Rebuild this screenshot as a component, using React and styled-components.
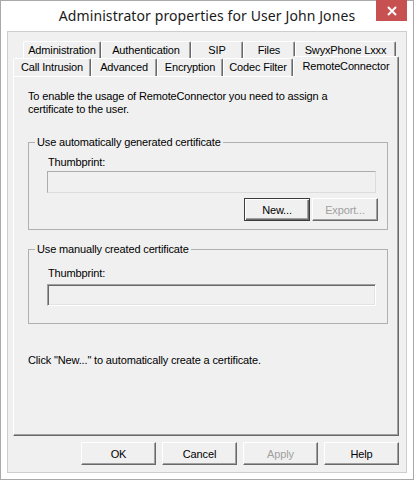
import React from 'react';
import styled, { createGlobalStyle, css } from 'styled-components';

const Global = createGlobalStyle`
  html, body { margin: 0; padding: 0; background: #fff; }
  body { font-family: "Liberation Sans", Arial, sans-serif; }
  * { box-sizing: border-box; }
`;

const Window = styled.div`
  width: 414px;
  height: 480px;
  border: 1px solid #a9a9a9;
  background: #fff;
  display: flex;
  flex-direction: column;
`;

const TitleBar = styled.div`
  position: relative;
  height: 30px;
  flex: none;
  display: flex;
  align-items: center;
  justify-content: center;
  padding-bottom: 2px;
  font-family: "Noto Sans", "Open Sans", sans-serif;
  font-size: 14px;
  letter-spacing: 0.1px;
  color: #1a1a1a;
`;

const CloseButton = styled.div`
  position: absolute;
  top: -1px;
  right: 6px;
  width: 31px;
  height: 21px;
  background: #c75050;
  display: flex;
  align-items: center;
  justify-content: center;
`;

const Client = styled.div`
  flex: 1;
  margin: 0 6px 6px;
  border: 1px solid #cdcdcd;
  background: #f0f0f0;
  padding: 9px 7px 7px 5px;
  display: flex;
  flex-direction: column;
  font-size: 11px;
  line-height: 13px;
  letter-spacing: -0.15px;
  color: #000;
`;

const TabStrip = styled.div`
  height: 35px;
  flex: none;
  display: flex;
  flex-direction: column;
`;

const TabRow = styled.div`
  display: flex;
  height: ${p => p.$h}px;
  padding-left: ${p => p.$indent}px;
`;

const Tab = styled.div`
  flex: none;
  width: ${p => p.$w}px;
  height: 100%;
  background: #f0f0f0;
  border-top: 1px solid #fff;
  border-left: 1px solid #fff;
  border-right: 1px solid #696969;
  box-shadow: inset -1px 0 #a0a0a0;
  border-radius: 2px 2px 0 0;
  display: flex;
  align-items: center;
  justify-content: center;
  white-space: nowrap;
  ${p => p.$selected && css`
    position: relative;
    z-index: 2;
    height: calc(100% + 3px);
    margin-top: -2px;
    align-items: flex-start;
    padding-top: 3px;
  `}
`;

const Panel = styled.div`
  height: 360px;
  flex: none;
  border-top: 1px solid #fff;
  border-left: 1px solid #fff;
  border-right: 1px solid #696969;
  border-bottom: 1px solid #696969;
  box-shadow: inset -1px -1px #a0a0a0;
  padding: 13px 10px 0 14px;
  display: flex;
  flex-direction: column;
`;

const Paragraph = styled.div`
  margin-top: ${p => p.$mt || 0}px;
`;

const Group = styled.fieldset`
  margin: ${p => p.$mt}px 0 0 0;
  padding: 0 11px ${p => p.$pb}px 18px;
  border: 1px solid #b0b0b0;
  min-width: 0;
  display: flex;
  flex-direction: column;
`;

const Legend = styled.legend`
  margin-left: -12px;
  padding: 0 2px;
  line-height: 13px;
`;

const Label = styled.div`
  margin-top: ${p => p.$mt}px;
  padding-left: 1px;
`;

const Field = styled.div`
  margin-top: ${p => p.$mt}px;
  height: 22px;
  background: #f0f0f0;
  border: 1px solid;
  ${p => p.$sunken
    ? css`
      border-color: #a0a0a0 #fff #fff #a0a0a0;
      box-shadow: inset 1px 1px #696969, inset -1px -1px #e3e3e3;
    `
    : css`
      border-color: #acacac #dcdcdc #dcdcdc #acacac;
    `}
`;

const ButtonRow = styled.div`
  display: flex;
  justify-content: flex-end;
  gap: ${p => p.$gap}px;
  margin-top: ${p => p.$mt}px;
  margin-right: ${p => p.$mr || 0}px;
`;

const Button = styled.button`
  width: ${p => p.$w}px;
  height: 23px;
  padding: 0;
  background: #f0f0f0;
  border: 1px solid;
  border-color: #fff #696969 #696969 #fff;
  box-shadow: inset -1px -1px #a0a0a0;
  font-family: "Liberation Sans", Arial, sans-serif;
  font-size: 11px;
  letter-spacing: -0.15px;
  color: #000;
  &:disabled {
    color: #a0a0a0;
  }
  ${p => p.$default && css`
    border: 1px solid #3c3c3c;
    box-shadow: inset 1px 1px #fff, inset -1px -1px #696969, inset -2px -2px #a0a0a0;
  `}
`;

const row1 = [
  ['Administration', 78],
  ['Authentication', 90],
  ['SIP', 52],
  ['Files', 52],
  ['SwyxPhone Lxxx', 101],
];

const row2 = [
  ['Call Intrusion', 78],
  ['Advanced', 66],
  ['Encryption', 66],
  ['Codec Filter', 70],
  ['RemoteConnector', 106, true],
];

export default function App() {
  return (
    <>
      <Global />
      <Window>
        <TitleBar>
          Administrator properties for User John Jones
          <CloseButton>
            <svg width="10" height="10" viewBox="0 0 10 10">
              <path d="M1 1 L9 9 M9 1 L1 9" stroke="#fff" strokeWidth="2" />
            </svg>
          </CloseButton>
        </TitleBar>
        <Client>
          <TabStrip>
            <TabRow $h={17} $indent={10}>
              {row1.map(([t, w]) => <Tab key={t} $w={w}>{t}</Tab>)}
            </TabRow>
            <TabRow $h={18} $indent={0}>
              {row2.map(([t, w, s]) => <Tab key={t} $w={w} $selected={s}>{t}</Tab>)}
            </TabRow>
          </TabStrip>
          <Panel>
            <Paragraph>
              To enable the usage of RemoteConnector you need to assign a<br />
              certificate to the user.
            </Paragraph>
            <Group $mt={20} $pb={8}>
              <Legend>Use automatically generated certificate</Legend>
              <Label $mt={7}>Thumbprint:</Label>
              <Field $mt={2} />
              <ButtonRow $gap={2} $mt={5} $mr={-2}>
                <Button $w={66} $default>New...</Button>
                <Button $w={66} disabled>Export...</Button>
              </ButtonRow>
            </Group>
            <Group $mt={13} $pb={17}>
              <Legend>Use manually created certificate</Legend>
              <Label $mt={11}>Thumbprint:</Label>
              <Field $mt={4} $sunken />
            </Group>
            <Paragraph $mt={30}>Click "New..." to automatically create a certificate.</Paragraph>
          </Panel>
          <ButtonRow $gap={6} $mt={6}>
            <Button $w={75}>OK</Button>
            <Button $w={75}>Cancel</Button>
            <Button $w={75} disabled>Apply</Button>
            <Button $w={75}>Help</Button>
          </ButtonRow>
        </Client>
      </Window>
    </>
  );
}
